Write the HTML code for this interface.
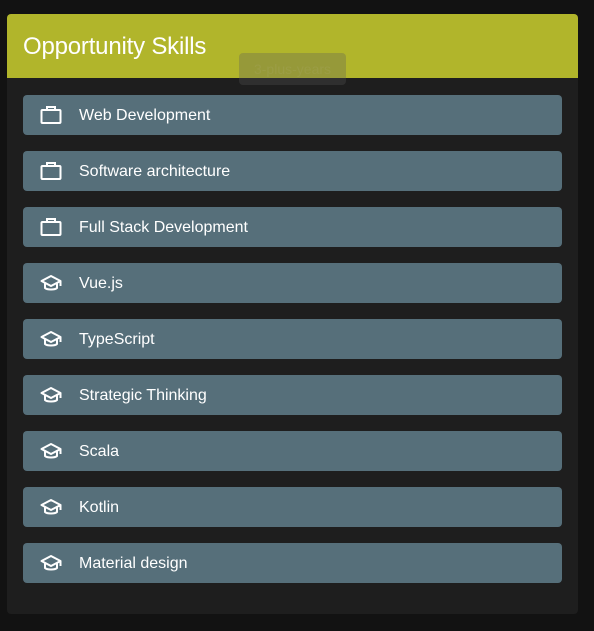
<!DOCTYPE html>
<html><head><style>
html,body{margin:0;padding:0;background:#121212;width:594px;height:631px;overflow:hidden;font-family:"Liberation Sans",Roboto,sans-serif}
.card{position:absolute;left:7px;top:14px;width:571px;height:600px;background:#1e1e1e;border-radius:4px;overflow:hidden}
.hd{height:64px;background:#b1b52b;position:relative}
.hd h1{margin:0;position:absolute;left:16px;top:19px;font-size:24px;font-weight:normal;color:#fff;letter-spacing:-0.2px}
.tip{position:absolute;left:232px;top:39px;width:107px;height:32px;background:rgba(90,90,90,0.3);border-radius:4px;color:#9b9d45;font-size:14px;line-height:32px;text-align:center;z-index:2}
.it{position:absolute;left:16px;width:539px;height:40px;background:#566f7a;border-radius:4px;color:#fff;font-size:16px}
.it span{position:absolute;left:56px;top:12px}
.it svg{position:absolute;left:17px;top:10px}
</style></head><body>
<div class="card">
<div class="hd"><h1>Opportunity Skills</h1></div>
<div class="tip">3-plus-years</div>
<div class="it" style="top:81px"><svg width="22" height="20" viewBox="0 0 22 20"><rect x="1.5" y="5" width="19" height="13" rx="1" fill="none" stroke="#fff" stroke-width="2"/><path d="M7 5V2h8v3" fill="none" stroke="#fff" stroke-width="2"/></svg><span>Web Development</span></div>
<div class="it" style="top:137px"><svg width="22" height="20" viewBox="0 0 22 20"><rect x="1.5" y="5" width="19" height="13" rx="1" fill="none" stroke="#fff" stroke-width="2"/><path d="M7 5V2h8v3" fill="none" stroke="#fff" stroke-width="2"/></svg><span>Software architecture</span></div>
<div class="it" style="top:193px"><svg width="22" height="20" viewBox="0 0 22 20"><rect x="1.5" y="5" width="19" height="13" rx="1" fill="none" stroke="#fff" stroke-width="2"/><path d="M7 5V2h8v3" fill="none" stroke="#fff" stroke-width="2"/></svg><span>Full Stack Development</span></div>
<div class="it" style="top:249px"><svg width="22" height="20" viewBox="0 0 22 20"><path d="M11 3L1.5 8 11 13 20.5 8Z M5 10v5c2 2 10 2 12 0v-5 M20.5 8v5" fill="none" stroke="#fff" stroke-width="2" stroke-linejoin="round"/></svg><span>Vue.js</span></div>
<div class="it" style="top:305px"><svg width="22" height="20" viewBox="0 0 22 20"><path d="M11 3L1.5 8 11 13 20.5 8Z M5 10v5c2 2 10 2 12 0v-5 M20.5 8v5" fill="none" stroke="#fff" stroke-width="2" stroke-linejoin="round"/></svg><span>TypeScript</span></div>
<div class="it" style="top:361px"><svg width="22" height="20" viewBox="0 0 22 20"><path d="M11 3L1.5 8 11 13 20.5 8Z M5 10v5c2 2 10 2 12 0v-5 M20.5 8v5" fill="none" stroke="#fff" stroke-width="2" stroke-linejoin="round"/></svg><span>Strategic Thinking</span></div>
<div class="it" style="top:417px"><svg width="22" height="20" viewBox="0 0 22 20"><path d="M11 3L1.5 8 11 13 20.5 8Z M5 10v5c2 2 10 2 12 0v-5 M20.5 8v5" fill="none" stroke="#fff" stroke-width="2" stroke-linejoin="round"/></svg><span>Scala</span></div>
<div class="it" style="top:473px"><svg width="22" height="20" viewBox="0 0 22 20"><path d="M11 3L1.5 8 11 13 20.5 8Z M5 10v5c2 2 10 2 12 0v-5 M20.5 8v5" fill="none" stroke="#fff" stroke-width="2" stroke-linejoin="round"/></svg><span>Kotlin</span></div>
<div class="it" style="top:529px"><svg width="22" height="20" viewBox="0 0 22 20"><path d="M11 3L1.5 8 11 13 20.5 8Z M5 10v5c2 2 10 2 12 0v-5 M20.5 8v5" fill="none" stroke="#fff" stroke-width="2" stroke-linejoin="round"/></svg><span>Material design</span></div>
</div>
</body></html>
